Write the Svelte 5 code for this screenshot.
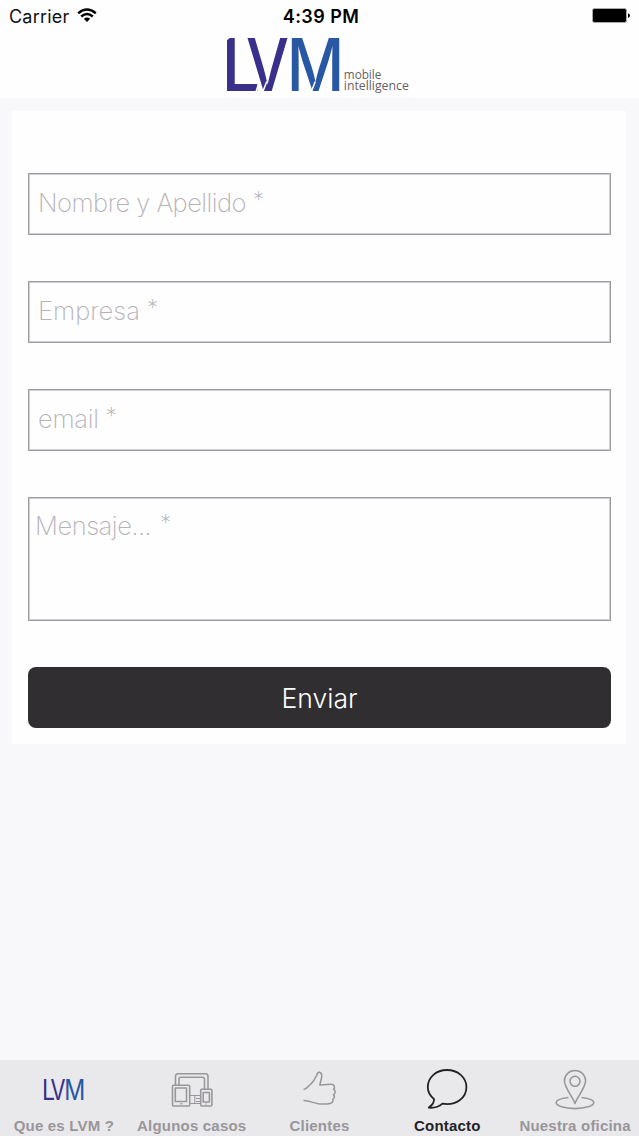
<script>
  const fields = [
    { label: 'Nombre y Apellido', spacing: -0.52 },
    { label: 'Empresa', spacing: 0 },
    { label: 'email', spacing: -0.25 },
  ];
  const tabs = [
    { id: 'lvm', label: 'Que es LVM ?' },
    { id: 'cases', label: 'Algunos casos' },
    { id: 'clients', label: 'Clientes' },
    { id: 'contact', label: 'Contacto', active: true },
    { id: 'office', label: 'Nuestra oficina' },
  ];
</script>

<div class="screen">
  <header>
    <div class="status">
      <div class="carrier">
        <span>Carrier</span>
        <svg width="20" height="15" viewBox="0 0 20 15" fill="none" stroke="#000" stroke-width="2.5">
          <path d="M1.2 5.2Q10-2.2 18.8 5.2" />
          <path d="M4.2 8.5Q10 3.6 15.8 8.5" />
          <path d="M6.8 10.8Q10 8.2 13.2 10.8L10 14Z" fill="#000" stroke="none" />
        </svg>
      </div>
      <span class="time">4:39 PM</span>
      <svg class="battery" width="39" height="16" viewBox="0 0 39 16">
        <rect x=".5" y=".5" width="34" height="14" rx="2" fill="#000" stroke="#aaa" />
        <path d="M36 5.3Q38 6 38 7.6T36 10Z" />
      </svg>
    </div>
    <svg class="logo" width="190" height="64" viewBox="0 0 190 64">
      <g font-family="Inter, sans-serif" font-size="73.5" font-weight="500">
        <text x="-3.5" y="57" textLength="39" lengthAdjust="spacingAndGlyphs" fill="#38308b">L</text>
        <text x="21" y="57" textLength="43" lengthAdjust="spacingAndGlyphs" fill="#38308b">V</text>
        <text x="61.8" y="57" textLength="57.5" lengthAdjust="spacingAndGlyphs" fill="#2857a4">M</text>
      </g>
      <path d="M37.5 58.5L41.8 47.5M86 58.5L90.3 47.5M33.5 50L30.8 58.5M0 7L6 2" fill="none" stroke="#fefefe" stroke-width="1.6" />
      <g font-family="Open Sans, sans-serif" font-size="12" fill="#656167">
        <text x="118.8" y="45" textLength="37.5" lengthAdjust="spacingAndGlyphs">mobile</text>
        <text x="118.8" y="56" textLength="65" lengthAdjust="spacingAndGlyphs">intelligence</text>
      </g>
    </svg>
  </header>

  <main>
    {#each fields as field}
      <div class="field">
        <span style:letter-spacing="{field.spacing}px">{field.label}</span><span class="star">*</span>
      </div>
    {/each}
    <div class="field message"><span>Mensaje...</span><span class="star">*</span></div>
    <button>Enviar</button>
  </main>

  <nav>
    {#each tabs as tab}
      <div class="tab" class:active={tab.active}>
        <svg width="48" height="48" viewBox="0 0 48 48" fill="none" stroke="currentColor" stroke-width="1.55" stroke-linejoin="round">
          {#if tab.id === 'lvm'}
            <g font-family="Inter, sans-serif" font-size="28" stroke="none">
              <text x="2" y="35" textLength="13" lengthAdjust="spacingAndGlyphs" fill="#38308b">L</text>
              <text x="10.5" y="35" textLength="15" lengthAdjust="spacingAndGlyphs" fill="#38308b">V</text>
              <text x="24.2" y="35" textLength="21" lengthAdjust="spacingAndGlyphs" fill="#2857a4">M</text>
            </g>
          {:else if tab.id === 'cases'}
            <path d="M7.5 20.5V11.5Q7.5 8.7 10 8.7H37.5Q40 8.7 40 11.5V24M11 20.5V14.5Q11 12.3 13 12.3H34.5Q36.5 12.3 36.5 14.5V24" />
            <rect x="4.5" y="20.2" width="17.2" height="20.8" rx="1" />
            <rect x="7.3" y="23" width="11.2" height="13.5" />
            <rect x="32.7" y="24.2" width="11.2" height="16.8" rx="1" />
            <rect x="35.2" y="27.5" width="6.2" height="9.5" />
            <path d="M12 38.8h2.5M37.5 39h1.5M22 30.5h10.5M28 33.5h4.5M28 36.5h4.5M22 38.5h10M26.8 31v8" stroke-width="1" />
          {:else if tab.id === 'clients'}
            <path d="M8.5 24.5C12.5 23.8 13.3 21 16 18.8C19 16.2 20.1 13.8 21.6 10.5C22.3 7.5 23 7 24.5 7.3C27.3 8 27 10.5 26.5 13L24.8 20L36 19.3C39.3 19.1 40.3 22 38.6 24.2C40.8 25.5 40.6 28.8 38.5 29.6C40 31.2 39.5 33.4 37.8 34.1C38.5 36.2 37.5 38 35 38.4C31 39.3 27.5 39.2 23.5 38.8C17 38 15.5 35.4 8.5 35.5" />
          {:else if tab.id === 'contact'}
            <path d="M24 5C13.3 5 4.8 12.1 4.8 22.2C4.8 27.5 7.4 31 11 34C11.4 37.5 8.7 40.5 5.8 42.6C11.5 43.2 16 41.6 19.4 38.6C33.5 41 43.4 32.6 43.4 22.2C43.4 12.3 34.7 5 24 5Z" stroke-width="1.8" />
          {:else}
            <path d="M24 38.5C23 34 13.4 22.5 13.4 16A10.6 10.6 0 0 1 34.6 16C34.6 22.5 25 34 24 38.5Z" />
            <circle cx="24" cy="16.3" r="5" />
            <path d="M17.4 32.5C10 33.3 5.2 35 5.2 37.6C5.2 40.9 13.5 43.6 24 43.6S42.8 40.9 42.8 37.6C42.8 35 38 33.3 30.6 32.5" />
          {/if}
        </svg>
        <span>{tab.label}</span>
      </div>
    {/each}
  </nav>
</div>

<style>
  :global(body) {
    margin: 0;
  }
  .screen {
    width: 639px;
    height: 1136px;
    display: flex;
    flex-direction: column;
    background: #f8f7fa;
    font-family: Inter, sans-serif;
    overflow: hidden;
  }
  header {
    height: 98px;
    flex: none;
    background: #fefefe;
  }
  .status {
    box-sizing: border-box;
    height: 34px;
    display: grid;
    grid-template-columns: 1fr auto 1fr;
    padding: 0 8px 2px 9px;
    align-items: center;
    color: #111;
    font-size: 18px;
  }
  .carrier {
    display: flex;
    align-items: center;
    gap: 8px;
    letter-spacing: 0.2px;
  }
  .carrier svg {
    margin-top: -1px;
  }
  .time {
    font-weight: 600;
    font-size: 18px;
    letter-spacing: 0.45px;
    padding-left: 2px;
    color: #000;
  }
  .battery {
    justify-self: end;
  }
  .logo {
    display: block;
    margin-left: 225px;
    overflow: visible;
  }
  main {
    box-sizing: border-box;
    width: 614px;
    height: 633px;
    flex: none;
    margin: 13px 0 0 12px;
    padding: 62px 15px 15px 16px;
    background: #fefefe;
    display: flex;
    flex-direction: column;
    gap: 46px;
  }
  .field {
    box-sizing: border-box;
    height: 62px;
    flex: none;
    border: 1px solid #9d9b9f;
    box-shadow: inset 0 0 0 1px #d0ced2;
    padding: 0 9px 3px;
    display: flex;
    align-items: center;
    font-size: 25.5px;
    font-weight: 200;
    color: #b5b2b7;
  }
  .star {
    font-size: 22px;
    margin: -7px 0 0 7px;
  }
  .message {
    height: 124px;
    align-items: flex-start;
    padding: 12px 6px;
    letter-spacing: -0.45px;
  }
  .message .star {
    margin: -1px 0 0 9px;
  }
  button {
    height: 61px;
    flex: none;
    padding: 0;
    border: 0;
    border-radius: 8px;
    background: #302e31;
    color: #fff;
    font-family: Inter, sans-serif;
    font-size: 26.5px;
    font-weight: 300;
  }
  nav {
    height: 76px;
    flex: none;
    margin-top: auto;
    display: grid;
    grid-template-columns: repeat(5, 1fr);
    background: #e9e8eb;
  }
  .tab {
    display: flex;
    flex-direction: column;
    align-items: center;
    padding-top: 5px;
    color: #98969a;
  }
  .tab span {
    font: bold 15px/18px "Liberation Sans", sans-serif;
    letter-spacing: 0.2px;
    margin-top: 4px;
    white-space: nowrap;
  }
  .active {
    color: #242226;
  }
</style>
